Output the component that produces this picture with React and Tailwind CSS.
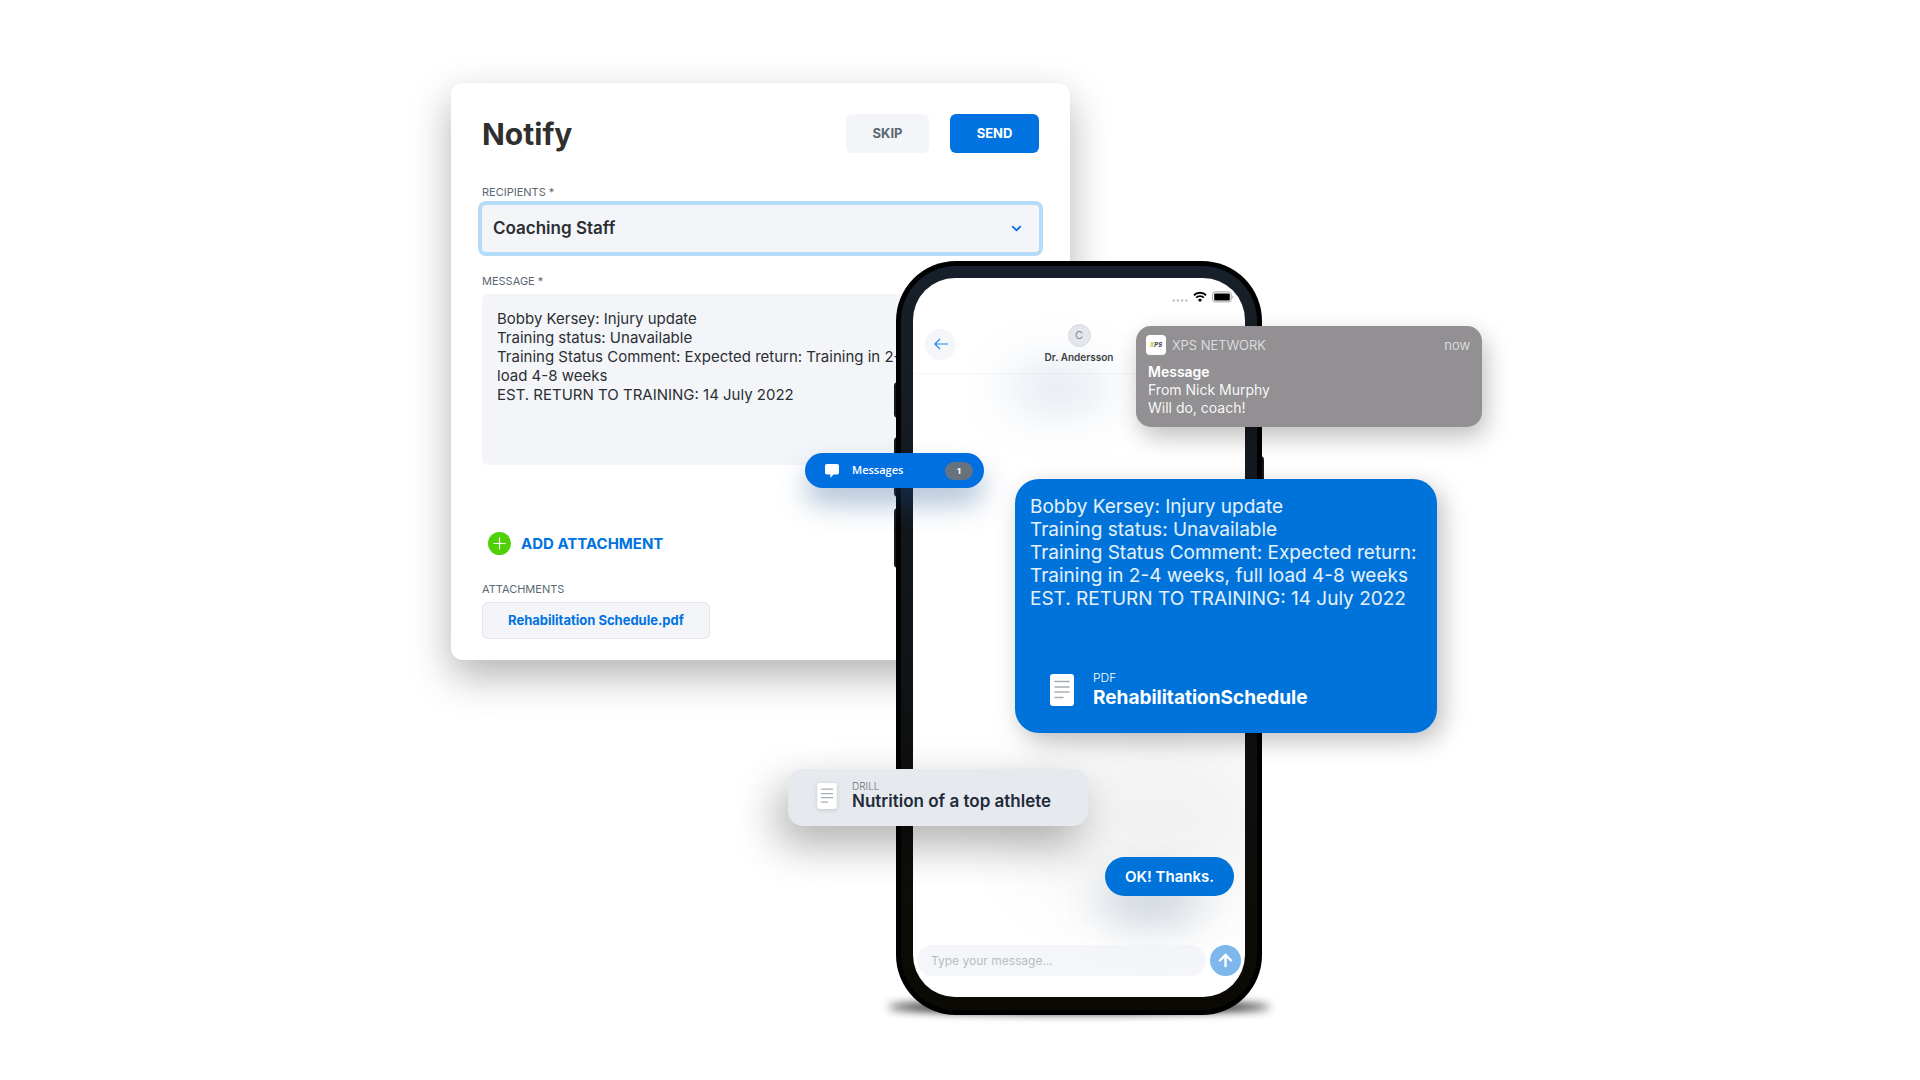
import { useState } from "react";
import { ArrowUp, ChevronDown } from "lucide-react";

const INITIAL_MESSAGE = [
    "Bobby Kersey: Injury update",
    "Training status: Unavailable",
    "Training Status Comment: Expected return: Training in 2-4 weeks, full load 4-8 weeks",
    "EST. RETURN TO TRAINING: 14 July 2022"
].join("\n");

const DocumentIcon = ({ className }) => (
    <svg viewBox="0 0 24 32" className={className} aria-hidden="true">
        <rect width="24" height="32" rx="3" fill="#fff" />
        <path
            d="M5 7.5h14M5 13h14M5 18h14M5 23.5h8"
            stroke="#a9aeb4"
            strokeWidth="1.6"
            strokeLinecap="round"
        />
    </svg>
);

const NotifyCard = () => {

    const [recipients, setRecipients] = useState("Coaching Staff");
    const [message, setMessage] = useState(INITIAL_MESSAGE);

    return (
        <section className="w-[619px] shrink-0 self-start rounded-xl bg-white px-[31px] pt-[31px] pb-[21px] shadow-[0_16px_40px_rgba(0,0,0,0.3)]">

            {/* HEADER */}
            <div className="flex items-center justify-between">

                <h1 className="text-[30px] leading-9 font-bold text-[#2f2f2f]">
                    Notify
                </h1>

                <div className="flex gap-[21px]">
                    <button className="h-[39px] w-[83px] rounded-md bg-[#f4f5f9] text-[13px] font-bold text-[#5a6872]">
                        SKIP
                    </button>
                    <button className="h-[39px] w-[89px] rounded-md bg-[#0073e1] text-[13px] font-bold text-white">
                        SEND
                    </button>
                </div>

            </div>

            {/* RECIPIENTS */}
            <div className="mt-[31px]">

                <label htmlFor="recipients" className="block text-[11px] leading-4 text-[#5a6872]">
                    RECIPIENTS *
                </label>

                <div className="relative mt-[5px]">
                    <select
                        id="recipients"
                        value={recipients}
                        onChange={(e) => setRecipients(e.target.value)}
                        className="block h-[47px] w-full appearance-none rounded-sm bg-[#f4f5f9] px-[11px] text-[17px] font-semibold text-[#2b2f33] ring-4 ring-[#b4dbf8] outline-none"
                    >
                        <option>Coaching Staff</option>
                        <option>Medical Staff</option>
                    </select>
                    <ChevronDown
                        size={15}
                        strokeWidth={3}
                        className="pointer-events-none absolute inset-y-0 right-[15px] my-auto text-[#0073e1]"
                    />
                </div>

            </div>

            {/* MESSAGE */}
            <div className="mt-[21px]">

                <label htmlFor="message" className="block text-[11px] leading-4 text-[#5a6872]">
                    MESSAGE *
                </label>

                <textarea
                    id="message"
                    value={message}
                    onChange={(e) => setMessage(e.target.value)}
                    className="mt-[5px] block h-[171px] w-full resize-none rounded-md bg-[#f4f5f9] px-[15px] py-[15px] text-[15px] leading-[19px] text-[#2b2f33] outline-none"
                />

            </div>

            {/* ATTACHMENTS */}
            <button className="mt-[67px] ml-[6px] flex items-center gap-[10px] text-[15px] leading-[23px] font-bold text-[#0073e1]">
                <svg viewBox="0 0 23 23" className="size-[23px]" aria-hidden="true">
                    <circle cx="11.5" cy="11.5" r="11.5" fill="#4fd007" />
                    <path d="M11.5 5.5v12M5.5 11.5h12" stroke="#fff" strokeWidth="1.2" />
                </svg>
                ADD ATTACHMENT
            </button>

            <h2 className="mt-[26px] text-[11px] leading-4 text-[#5a6872]">
                ATTACHMENTS
            </h2>

            <button className="mt-[5px] h-[37px] w-[228px] rounded-md border border-[#e4e6ec] bg-[#f4f5f9] text-[13px] font-bold text-[#0073e1]">
                Rehabilitation Schedule.pdf
            </button>

        </section>
    );
};

const StatusBar = () => (
    <div className="flex h-[37px] items-center justify-end gap-[5px] pr-[11px]">

        <svg viewBox="0 0 16 12" className="h-3 w-4" fill="#c4c4c6" aria-hidden="true">
            <circle cx="1.8" cy="9.5" r="1.3" />
            <circle cx="6" cy="9.5" r="1.3" />
            <circle cx="10.2" cy="9.5" r="1.3" />
            <circle cx="14.4" cy="9.5" r="1.3" />
        </svg>

        <svg viewBox="0 0 14 11" className="h-[11px] w-[14px]" fill="none" stroke="#000" strokeWidth="1.9" aria-hidden="true">
            <path d="M0.9 4.2a8.7 8.7 0 0 1 12.2 0" />
            <path d="M3.2 6.7a5.4 5.4 0 0 1 7.6 0" />
            <path d="M7 11L4.9 8.8a3 3 0 0 1 4.2 0z" fill="#000" stroke="none" />
        </svg>

        <svg viewBox="0 0 22 12" className="h-3 w-[22px]" aria-hidden="true">
            <rect x="0.6" y="0.9" width="18.6" height="10" rx="2.6" fill="#fff" stroke="#a3a3a5" />
            <rect x="2.2" y="2.4" width="15.6" height="7" rx="1.2" fill="#000" />
            <path d="M20.4 4.4v3a1.7 1.7 0 0 0 0-3z" fill="#a3a3a5" />
        </svg>

    </div>
);

const Phone = () => {

    const [draft, setDraft] = useState("");

    return (
        <div className="relative mt-[178px] -ml-[174px] h-[754px] w-[366px] shrink-0">

            {/* ground shadow and side keys */}
            <div className="absolute -inset-x-[8px] bottom-[2px] h-[12px] rounded-[50%] bg-black blur-[5px]" />
            <div className="absolute top-[121px] -left-[2px] h-[36px] w-1 rounded-l-sm bg-[#15191c]" />
            <div className="absolute top-[176px] -left-[2px] h-[60px] w-1 rounded-l-sm bg-[#15191c]" />
            <div className="absolute top-[247px] -left-[2px] h-[60px] w-1 rounded-l-sm bg-[#15191c]" />
            <div className="absolute top-[195px] -right-[2px] h-[96px] w-1 rounded-r-sm bg-[#15191c]" />

            <div className="relative h-full rounded-[60px] bg-black p-[5px]">
                <div className="h-full rounded-[55px] bg-linear-to-b from-[#17202a] via-[#101418] to-[#0b0903] px-3 pt-3 pb-[13px]">

                    <div className="relative flex h-full flex-col overflow-hidden rounded-[42px] bg-white">

                        {/* soft haze behind the bubbles */}
                        <div className="absolute top-[80px] left-[90px] h-[60px] w-[110px] rounded-[50%] bg-[#5b7fa5]/15 blur-[22px]" />
                        <div className="absolute right-[40px] bottom-[70px] h-[50px] w-[110px] rounded-[50%] bg-[#5b7396]/25 blur-[20px]" />
                        <div className="absolute -right-[40px] bottom-[90px] h-[180px] w-[260px] rounded-[50%] bg-black/5 blur-[40px]" />

                        <StatusBar />

                        {/* CHAT HEADER */}
                        <header className="relative grid h-[59px] grid-cols-[60px_1fr_60px] items-center border-b border-black/3">
                            <button aria-label="Back" className="ml-3 flex size-[31px] items-center justify-center rounded-full bg-[#f5f6fa]">
                                <svg viewBox="0 0 14 12" className="h-3 w-[14px]" fill="none" stroke="#2386ea" strokeWidth="1.2" aria-hidden="true">
                                    <path d="M14 6H.8M6 1L.8 6L6 11" />
                                </svg>
                            </button>
                            <div className="flex flex-col items-center">
                                <span className="flex size-[23px] items-center justify-center rounded-full border border-[#d9dbe0] bg-[#e4e6eb] text-[11px] text-[#85898f]">
                                    C
                                </span>
                                <span className="mt-[2px] text-[10px] leading-4 font-semibold text-[#3c3f43]">
                                    Dr. Andersson
                                </span>
                            </div>
                        </header>

                        {/* COMPOSER */}
                        <form
                            onSubmit={(e) => e.preventDefault()}
                            className="relative mt-auto mb-[21px] flex items-center gap-1 pr-1 pl-1"
                        >
                            <input
                                type="text"
                                aria-label="Message"
                                value={draft}
                                onChange={(e) => setDraft(e.target.value)}
                                placeholder="Type your message..."
                                className="h-[31px] min-w-0 flex-1 rounded-full bg-[#eef0f6]/60 px-[14px] text-xs text-[#2b2f33] outline-none placeholder:text-[#b9bcc2]"
                            />
                            <button aria-label="Send message" className="flex size-[31px] shrink-0 items-center justify-center rounded-full bg-[#7eb7ec] text-white">
                                <ArrowUp size={19} strokeWidth={3} />
                            </button>
                        </form>

                    </div>

                </div>
            </div>

        </div>
    );
};

const Notification = () => (
    <article className="absolute top-[243px] left-[685px] h-[101px] w-[346px] rounded-[15px] bg-[#929093] px-3 pt-[9px] text-white shadow-[4px_10px_24px_rgba(0,0,0,0.25)]">

        <div className="-ml-[2px] flex items-center text-[13px] leading-5 font-light text-white/80">
            <span className="flex size-5 items-center justify-center rounded bg-white text-[6px] leading-none font-extrabold text-[#3f4a55] italic">
                <span className="text-[#c9cc1f]">X</span>PS
            </span>
            <span className="ml-[6px]">XPS NETWORK</span>
            <span className="ml-auto">now</span>
        </div>

        <p className="mt-2 text-sm leading-[18px] font-semibold">Message</p>
        <p className="text-sm leading-[18px] text-white/95">From Nick Murphy</p>
        <p className="text-sm leading-[18px] text-white/95">Will do, coach!</p>

    </article>
);

const MessagesPill = () => (
    <button className="absolute top-[370px] left-[354px] flex h-[35px] w-[179px] items-center rounded-full bg-[#006fe0] pr-[11px] pl-5 font-['Open_Sans',sans-serif] text-[11px] font-semibold text-white shadow-[0_16px_28px_rgba(30,80,140,0.35)]">
        <svg viewBox="0 0 14 14" className="size-[14px]" fill="#fff" aria-hidden="true">
            <path d="M1.8 0h10.4A1.8 1.8 0 0 1 14 1.8v7a1.8 1.8 0 0 1-1.8 1.8H8.4L5.4 14v-3.4H1.8A1.8 1.8 0 0 1 0 8.8V1.8A1.8 1.8 0 0 1 1.8 0z" />
        </svg>
        <span className="ml-[13px]">Messages</span>
        <span className="ml-auto flex h-[18px] w-7 items-center justify-center rounded-full bg-[#66727e] text-[9px] font-bold">
            1
        </span>
    </button>
);

const InjuryBubble = () => (
    <article className="absolute top-[396px] left-[564px] w-[422px] rounded-[24px] bg-[#0073db] px-[15px] pt-4 pb-[23px] text-white shadow-[6px_8px_24px_rgba(0,0,0,0.25)]">

        <p className="text-[19px] leading-[23px] whitespace-nowrap text-white/90">
            Bobby Kersey: Injury update<br />
            Training status: Unavailable<br />
            Training Status Comment: Expected return:<br />
            Training in 2-4 weeks, full load 4-8 weeks<br />
            EST. RETURN TO TRAINING: 14 July 2022
        </p>

        <a href="#schedule" className="mt-[60px] ml-5 flex items-center gap-[19px]">
            <DocumentIcon className="h-8 w-6" />
            <span className="flex flex-col">
                <span className="text-xs leading-4 font-light">PDF</span>
                <span className="text-[19px] leading-6 font-bold">RehabilitationSchedule</span>
            </span>
        </a>

    </article>
);

const DrillCard = () => (
    <a
        href="#drill"
        className="absolute top-[686px] left-[337px] flex h-[57px] w-[300px] items-center gap-[15px] rounded-[15px] bg-[#e6e9ee] pb-1 pl-[29px] shadow-[-10px_18px_44px_rgba(0,0,0,0.32)]"
    >
        <DocumentIcon className="h-[26px] w-5 drop-shadow-sm" />
        <span className="flex flex-col">
            <span className="text-[10px] leading-3 font-light text-[#6d747b]">DRILL</span>
            <span className="text-[17px] leading-[19px] font-semibold text-[#1f2b3a]">Nutrition of a top athlete</span>
        </span>
    </a>
);

const App = () => {

    return (
        <main className="min-h-screen overflow-hidden bg-white pt-[83px] pb-16 font-['Inter',sans-serif]">

            <div className="relative mx-auto flex w-[1018px]">

                <NotifyCard />
                <Phone />

                {/* FLOATING ITEMS */}
                <Notification />
                <MessagesPill />
                <InjuryBubble />
                <DrillCard />

                <p className="absolute top-[774px] left-[654px] w-[129px] rounded-full bg-[#0073db] text-center text-[15px] leading-[39px] font-semibold text-white">
                    OK! Thanks.
                </p>

            </div>

        </main>
    );
};

export default App;
